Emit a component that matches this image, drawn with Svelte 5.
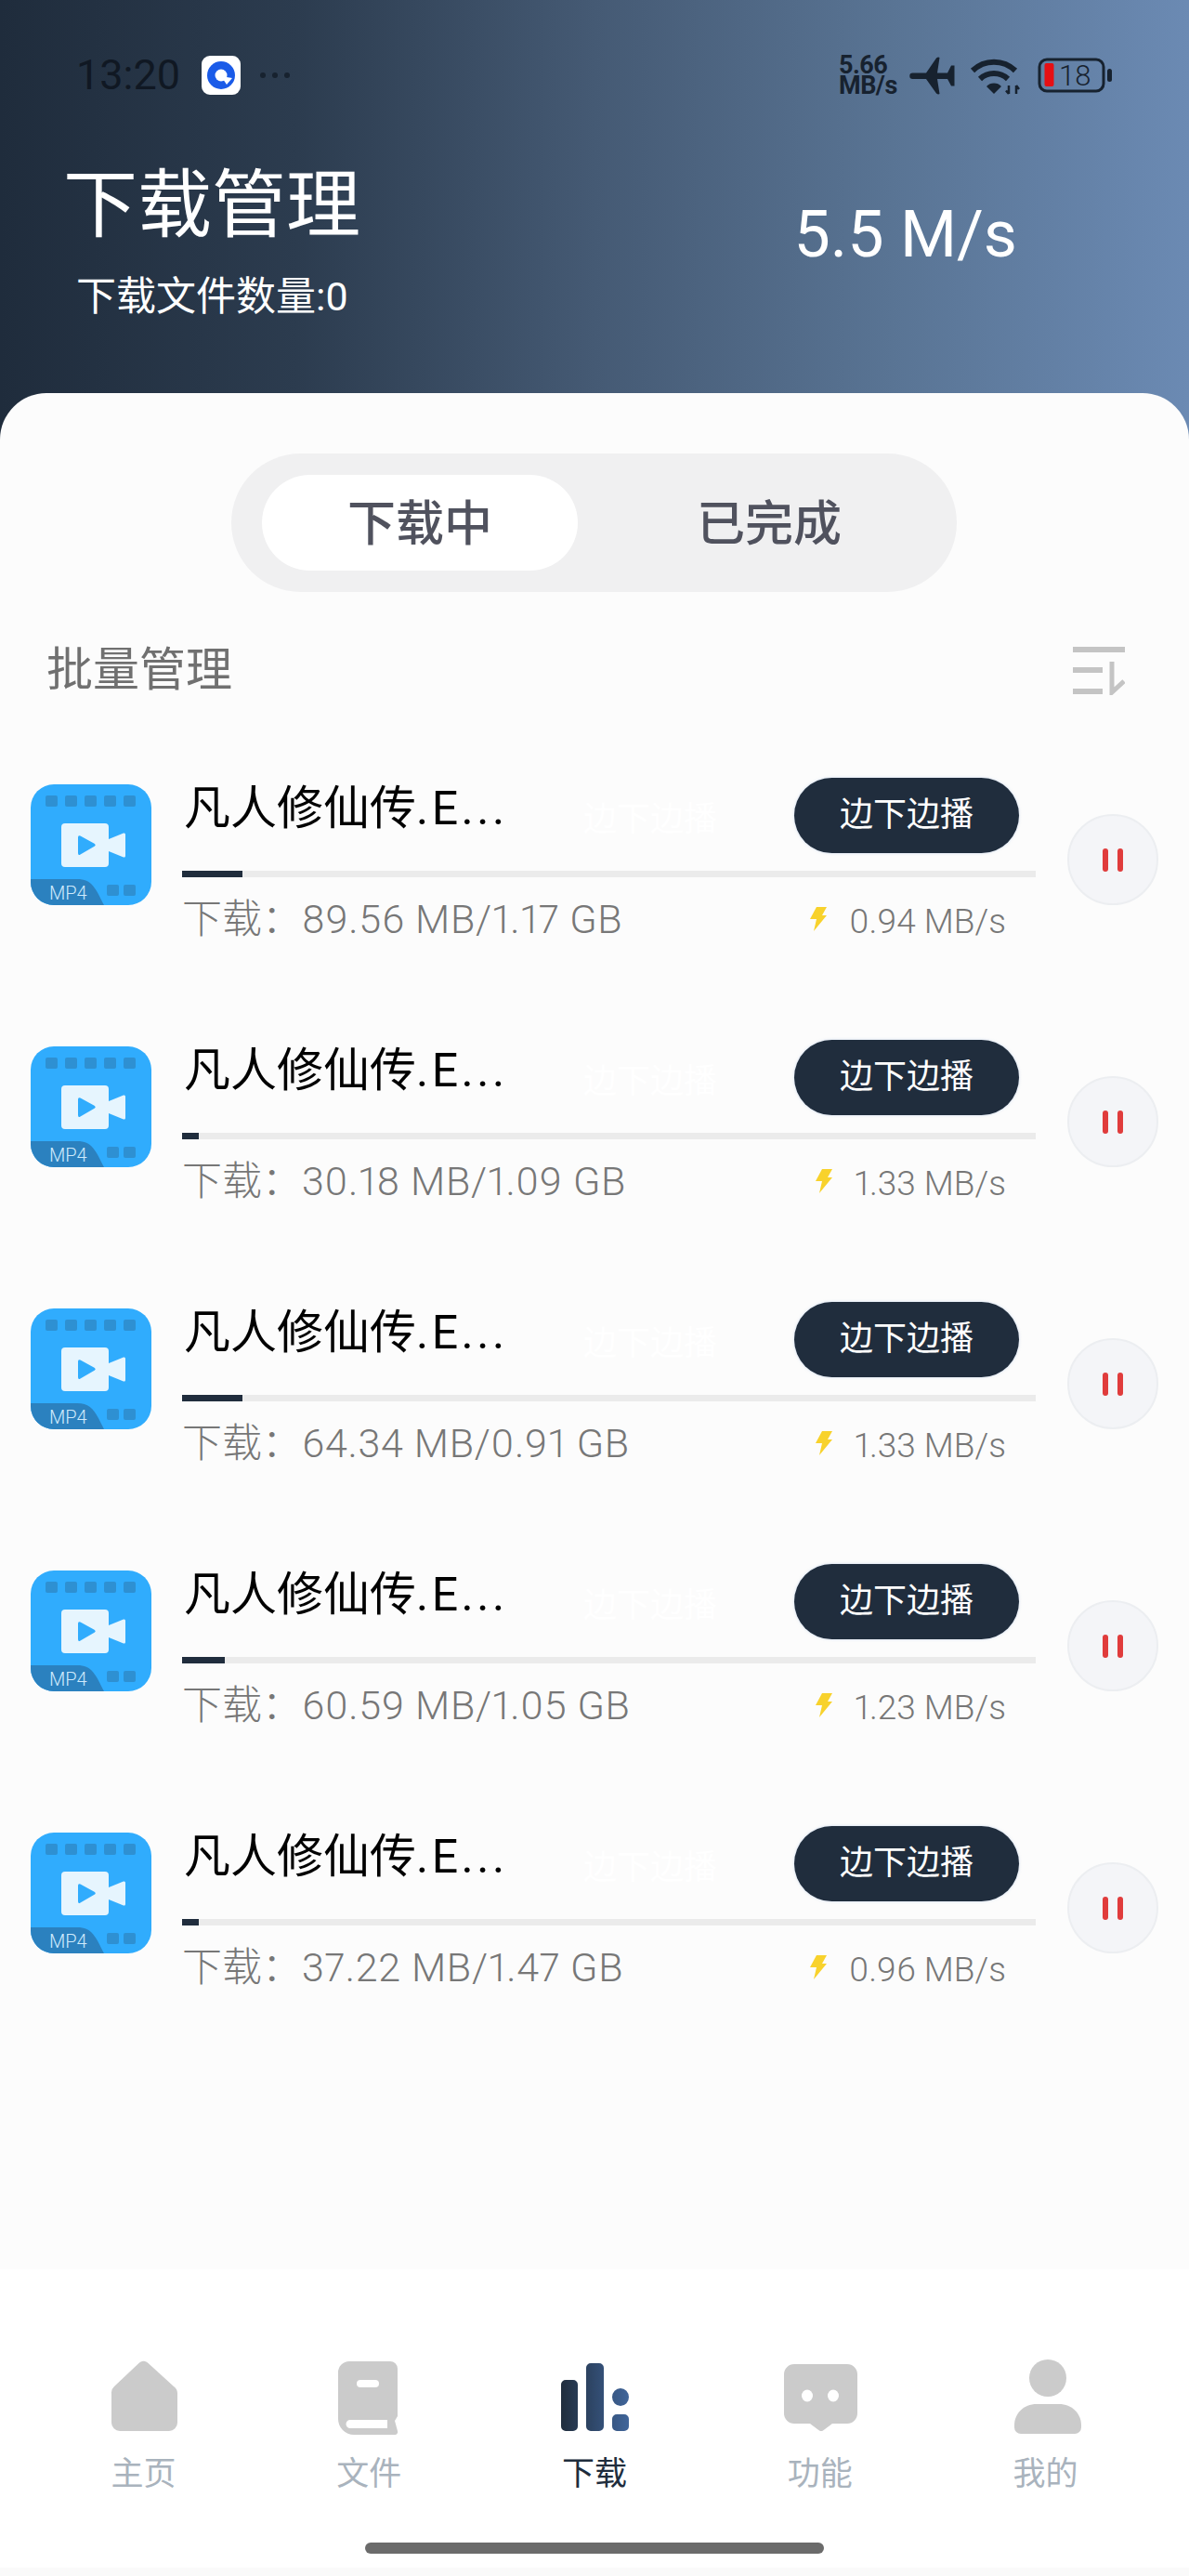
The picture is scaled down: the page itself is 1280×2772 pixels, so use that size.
<script>
  // download list as shown in the screenshot
  const tasks = [
    { id: 1, done: '89.56 MB', total: '1.17 GB', speed: '0.94 MB/s', bar: 65 },
    { id: 2, done: '30.18 MB', total: '1.09 GB', speed: '1.33 MB/s', bar: 18 },
    { id: 3, done: '64.34 MB', total: '0.91 GB', speed: '1.33 MB/s', bar: 65 },
    { id: 4, done: '60.59 MB', total: '1.05 GB', speed: '1.23 MB/s', bar: 46 },
    { id: 5, done: '37.22 MB', total: '1.47 GB', speed: '0.96 MB/s', bar: 18 },
  ];
  const holesTop = [16, 37, 58, 79, 100];
</script>

<div class="page">
  <header class="header">
    <div class="status">
      <span class="time">13:20</span>
      <svg class="app-icon" width="42" height="42" viewBox="0 0 42 42">
        <rect width="42" height="42" rx="9" fill="#fff" />
        <circle cx="21" cy="21" r="15" fill="#1a5be8" />
        <circle cx="21" cy="21" r="6.500" fill="#fff" />
        <path d="M21 22 L33 24 L27 31 Z" fill="#fff" />
      </svg>
      <span class="dots"><i></i><i></i><i></i></span>
      <span class="net">5.66<br />MB/s</span>
      <svg class="plane" width="49" height="41" viewBox="0 0 49 41">
        <path d="M3.500 17.500H18L29 1.500q2-1.500 3.500-.5L30 17.500H41L45 9.500h3.500V31.500H45L41 24H30l2.500 16q-1.500 1-3.500-.5L18 24H3.500a3.250 3.250 0 0 1 0-6.500z" fill="#17222f" />
      </svg>
      <svg class="wifi" width="55" height="41" viewBox="0 0 55 41" fill="none" stroke="#17222f">
        <path d="M3 15A33 33 0 0 1 49 15" stroke-width="6" />
        <path d="M11 24A22 22 0 0 1 41 24" stroke-width="6" />
        <path d="M26 40L18 32a11 11 0 0 1 16 0z" fill="#17222f" stroke="none" />
        <path d="M42 31V40M39 36.500L42 40M50 40V31M50 31L53 35" stroke-width="2.500" />
      </svg>
      <svg class="battery" width="81" height="38" viewBox="0 0 81 38">
        <rect x="2" y="2" width="69" height="34" rx="8" fill="none" stroke="#17222f" stroke-width="3" />
        <rect x="7.500" y="6" width="10" height="25" rx="2" fill="#e60f14" />
        <text x="23" y="30" class="batt-text">18</text>
        <rect x="75" y="12" width="5" height="14" rx="2.500" fill="#17222f" />
      </svg>
    </div>
    <div class="head-row">
      <div>
        <div class="title">下载管理</div>
        <div class="count">下载文件数量:0</div>
      </div>
      <div class="rate">5.5 M/s</div>
    </div>
  </header>

  <main class="sheet">
    <div class="tabs">
      <div class="tab active">下载中</div>
      <div class="tab">已完成</div>
    </div>

    <div class="manage">
      <span class="manage-label">批量管理</span>
      <svg width="56" height="52" viewBox="0 0 56 52" fill="none" stroke="#c4c4c4">
        <path d="M0 3H56M0 25H32M0 48H32" stroke-width="6" />
        <path d="M42 16V49L55 37" stroke-width="5" />
      </svg>
    </div>

    <div class="list">
      {#each tasks as t (t.id)}
        <div class="row">
          <svg class="thumb" width="130" height="130" viewBox="0 0 130 130">
            <rect width="130" height="130" rx="25" fill="#30acfd" />
            {#each holesTop as x}
              <rect {x} y="12" width="13" height="12" rx="2" fill="#2e90d2" />
            {/each}
            <rect x="33" y="42" width="51" height="47" rx="4" fill="#e6f5fe" />
            <path d="M84 59L100 52.500q2-.5 2 1.500V77q0 2-2 1.500L84 72z" fill="#e6f5fe" />
            <path d="M51 57q0-2.500 2.500-1.500L69 64q1.500 1.500 0 2.500L53.500 75.500Q51 77 51 74z" fill="#30acfd" />
            <path d="M0 102H50C66 102 70 112 79 130H25A25 25 0 0 1 0 105z" fill="#2b81bf" />
            <text x="20" y="124" class="mp4">MP4</text>
            <rect x="82" y="108" width="13" height="12" rx="2" fill="#2e90d2" />
            <rect x="100" y="108" width="13" height="12" rx="2" fill="#2e90d2" />
          </svg>

          <div class="body">
            <div class="top">
              <span class="name">凡人修仙传<span class="name-tail">.E...</span></span>
              <span class="ghost">边下边播</span>
              <span class="play-btn">边下边播</span>
            </div>
            <div class="track"><div class="fill" style="width: {t.bar}px"></div></div>
            <div class="stats">
              <span class="size"><span class="size-label">下载：</span>{t.done}/{t.total}</span>
              <span class="speed">
                <svg width="20" height="26" viewBox="0 0 20 26">
                  <path d="M9 0H20L15 9H20L6 26L9 13H2z" fill="#f8d22c" />
                </svg>
                {t.speed}
              </span>
            </div>
          </div>

          <div class="pause"><i></i><i></i></div>
        </div>
      {/each}
    </div>
  </main>

  <nav class="nav">
    <div class="nav-items">
      <div class="nav-item">
        <svg width="80" height="84" viewBox="0 0 80 84">
          <path d="M36 4.500a6.500 6.500 0 0 1 9 0L73 30a9 9 0 0 1 4 8V69a9 9 0 0 1-9 9H15a9 9 0 0 1-9-9V38a9 9 0 0 1 3-8z" fill="#cbcbcb" />
        </svg>
        <span>主页</span>
      </div>
      <div class="nav-item">
        <svg width="80" height="84" viewBox="0 0 80 84">
          <path d="M19 3H63a8 8 0 0 1 8 8V62l-3 5 3 11a3 3 0 0 1-3 4H24A17 17 0 0 1 7 65V15A12 12 0 0 1 19 3z" fill="#cbcbcb" />
          <rect x="27" y="23" width="24" height="8" rx="4" fill="#fff" />
          <path d="M20 66H60V75H20a4.500 4.500 0 0 1 0-9z" fill="#fff" />
        </svg>
        <span>文件</span>
      </div>
      <div class="nav-item current">
        <svg width="80" height="84" viewBox="0 0 80 84">
          <defs>
            <linearGradient id="barGrad" x1="0" x2="1" y1="0" y2="0">
              <stop offset="0" stop-color="#202d3d" />
              <stop offset="1" stop-color="#40659a" />
            </linearGradient>
          </defs>
          <path
            d="M9 23h8a5 5 0 0 1 5 5V73a5 5 0 0 1-5 5H9a5 5 0 0 1-5-5V28a5 5 0 0 1 5-5zM36 5h9a5 5 0 0 1 5 5V73a5 5 0 0 1-5 5H36a5 5 0 0 1-5-5V10a5 5 0 0 1 5-5zM68 32a9 9.500 0 0 1 0 19a9 9.500 0 0 1 0-19zM64 60h8a5 5 0 0 1 5 5V73a5 5 0 0 1-5 5H64a5 5 0 0 1-5-5V65a5 5 0 0 1 5-5z"
            fill="url(#barGrad)"
          />
        </svg>
        <span>下载</span>
      </div>
      <div class="nav-item">
        <svg width="80" height="84" viewBox="0 0 80 84">
          <path d="M12 6H69a11 11 0 0 1 11 11V59a11 11 0 0 1-11 11H53L43 77.500q-2 1-4 0L29 70H12A11 11 0 0 1 1 59V17A11 11 0 0 1 12 6z" fill="#cbcbcb" />
          <ellipse cx="26" cy="40" rx="6" ry="6.500" fill="#fff" />
          <ellipse cx="54" cy="40" rx="6" ry="6.500" fill="#fff" />
        </svg>
        <span>功能</span>
      </div>
      <div class="nav-item">
        <svg width="80" height="84" viewBox="0 0 80 84">
          <ellipse cx="42" cy="21" rx="20" ry="20" fill="#cbcbcb" />
          <path d="M6 72C6 59 16 49 30 49H54C68 49 78 59 78 72V74a7 7 0 0 1-7 7H13a7 7 0 0 1-7-7z" fill="#cbcbcb" />
        </svg>
        <span>我的</span>
      </div>
    </div>
    <div class="home-bar"></div>
  </nav>
</div>

<style>
  :global(body) {
    margin: 0;
    background: #fff;
  }

  .page {
    width: 1280px;
    height: 2772px;
    overflow: hidden;
    display: flex;
    flex-direction: column;
    font-family: Roboto, "Noto Sans CJK SC", sans-serif;
  }

  .header {
    height: 473px;
    flex: none;
    box-sizing: border-box;
    padding-top: 60px;
    background: linear-gradient(90deg, #1f2c3c 0%, #2c3c4f 25%, #455a74 50%, #597494 75%, #6b8ab3 100%);
  }

  .status {
    display: flex;
    align-items: center;
    height: 42px;
    padding-left: 82px;
  }

  .time {
    font-size: 45px;
    line-height: 42px;
    color: #101823;
    width: 135px;
  }

  .dots {
    display: flex;
    gap: 7px;
    margin-left: 21px;
  }

  .dots i {
    width: 6px;
    height: 6px;
    border-radius: 50%;
    background: #17222f;
  }

  .net {
    margin-left: 591px;
    width: 76px;
    font-size: 27px;
    line-height: 22px;
    font-weight: 700;
    color: #17222f;
    letter-spacing: -0.5px;
  }

  .wifi {
    margin-left: 16px;
  }

  .battery {
    margin-left: 18px;
  }

  .batt-text {
    font-size: 31px;
    fill: #17222f;
    font-weight: 300;
  }

  .head-row {
    display: flex;
    justify-content: space-between;
    margin-top: 71px;
    padding: 0 185px 0 68px;
  }

  .title {
    font-size: 80px;
    line-height: 96px;
    color: #fff;
  }

  .count {
    margin: 22px 0 0 14px;
    font-size: 43px;
    line-height: 56px;
    color: #fff;
  }

  .rate {
    margin-top: 37px;
    font-size: 70px;
    line-height: 84px;
    color: #fff;
  }

  .sheet {
    flex: 1;
    margin-top: -50px;
    padding-top: 65px;
    background: #fcfcfc;
    border-radius: 50px 50px 0 0;
  }

  .tabs {
    width: 781px;
    height: 149px;
    margin-left: 249px;
    box-sizing: border-box;
    padding: 23px 0 23px 33px;
    display: flex;
    background: #f0f0f1;
    border-radius: 75px;
  }

  .tab {
    width: 340px;
    border-radius: 52px;
    text-align: center;
    font-size: 52px;
    line-height: 108px;
    font-weight: 500;
    color: #50525e;
  }

  .tab + .tab {
    margin-left: 36px;
  }

  .active {
    background: #fff;
  }

  .manage {
    display: flex;
    justify-content: space-between;
    align-items: center;
    height: 52px;
    margin-top: 59px;
    padding: 0 69px 0 50px;
    font-size: 50px;
    color: #707070;
  }

  .manage-label {
    margin-top: -12px;
  }

  .list {
    margin-top: 89px;
  }

  .row {
    display: flex;
    height: 282px;
    padding-left: 33px;
  }

  .thumb {
    flex: none;
    margin-top: 7px;
  }

  .mp4 {
    font-size: 20px;
    fill: #cfeafc;
    font-weight: 300;
  }

  .body {
    width: 919px;
    margin-left: 33px;
  }

  .top {
    display: flex;
    align-items: center;
    height: 81px;
    padding-right: 18px;
  }

  .name {
    width: 430px;
    margin-left: 2px;
    font-size: 50px;
    color: #000;
    white-space: nowrap;
    margin-top: -26px;
  }

  .name-tail {
    letter-spacing: 3.5px;
  }

  .ghost {
    font-size: 36px;
    color: #fff;
    width: 227px;
    margin-left: -3px;
    padding-left: 3px;
  }

  .play-btn {
    width: 242px;
    height: 81px;
    border-radius: 41px;
    background: #202d3d;
    color: #fff;
    font-size: 36px;
    line-height: 81px;
    text-align: center;
    box-shadow: 0 0 3px rgba(150, 180, 220, 0.5);
  }

  .track {
    height: 7px;
    margin-top: 19px;
    background: #ebebeb;
  }

  .fill {
    height: 100%;
    background: #202d3d;
  }

  .stats {
    display: flex;
    justify-content: space-between;
    align-items: center;
    margin-top: 17px;
    padding-right: 32px;
    color: #777;
  }

  .size {
    font-size: 43px;
    font-weight: 300;
    line-height: 56px;
    letter-spacing: 0.7px;
    font-variant-numeric: proportional-nums;
  }

  .size-label {
    letter-spacing: 0;
  }

  .speed {
    display: flex;
    align-items: center;
    gap: 24px;
    margin-top: 6px;
    font-size: 37px;
    font-weight: 300;
    line-height: 50px;
    font-variant-numeric: proportional-nums;
  }

  .speed svg {
    margin-top: -6px;
  }

  .pause {
    flex: none;
    width: 98px;
    height: 98px;
    box-sizing: border-box;
    margin: 39px 0 0 34px;
    display: flex;
    align-items: center;
    justify-content: center;
    gap: 10px;
    background: #f4f5f8;
    border: 2px solid #eceef1;
    border-radius: 50%;
  }

  .pause i {
    width: 6px;
    height: 25px;
    border-radius: 3px;
    background: #e03c3c;
  }

  .nav {
    flex: none;
    height: 330px;
    box-sizing: border-box;
    padding-top: 96px;
    background: #fff;
    border-bottom: 9px solid #fafafa;
  }

  .nav-items {
    display: grid;
    grid-template-columns: repeat(5, 1fr);
    padding: 0 33px;
  }

  .nav-item {
    display: flex;
    flex-direction: column;
    align-items: center;
    font-size: 35px;
    line-height: 46px;
    color: #a9b3bd;
  }

  .nav-item span {
    margin-top: 18px;
  }

  .current {
    color: #202d3d;
  }

  .home-bar {
    width: 494px;
    height: 12px;
    margin: 50px 0 0 393px;
    border-radius: 6px;
    background: #6b6b6b;
  }
</style>
